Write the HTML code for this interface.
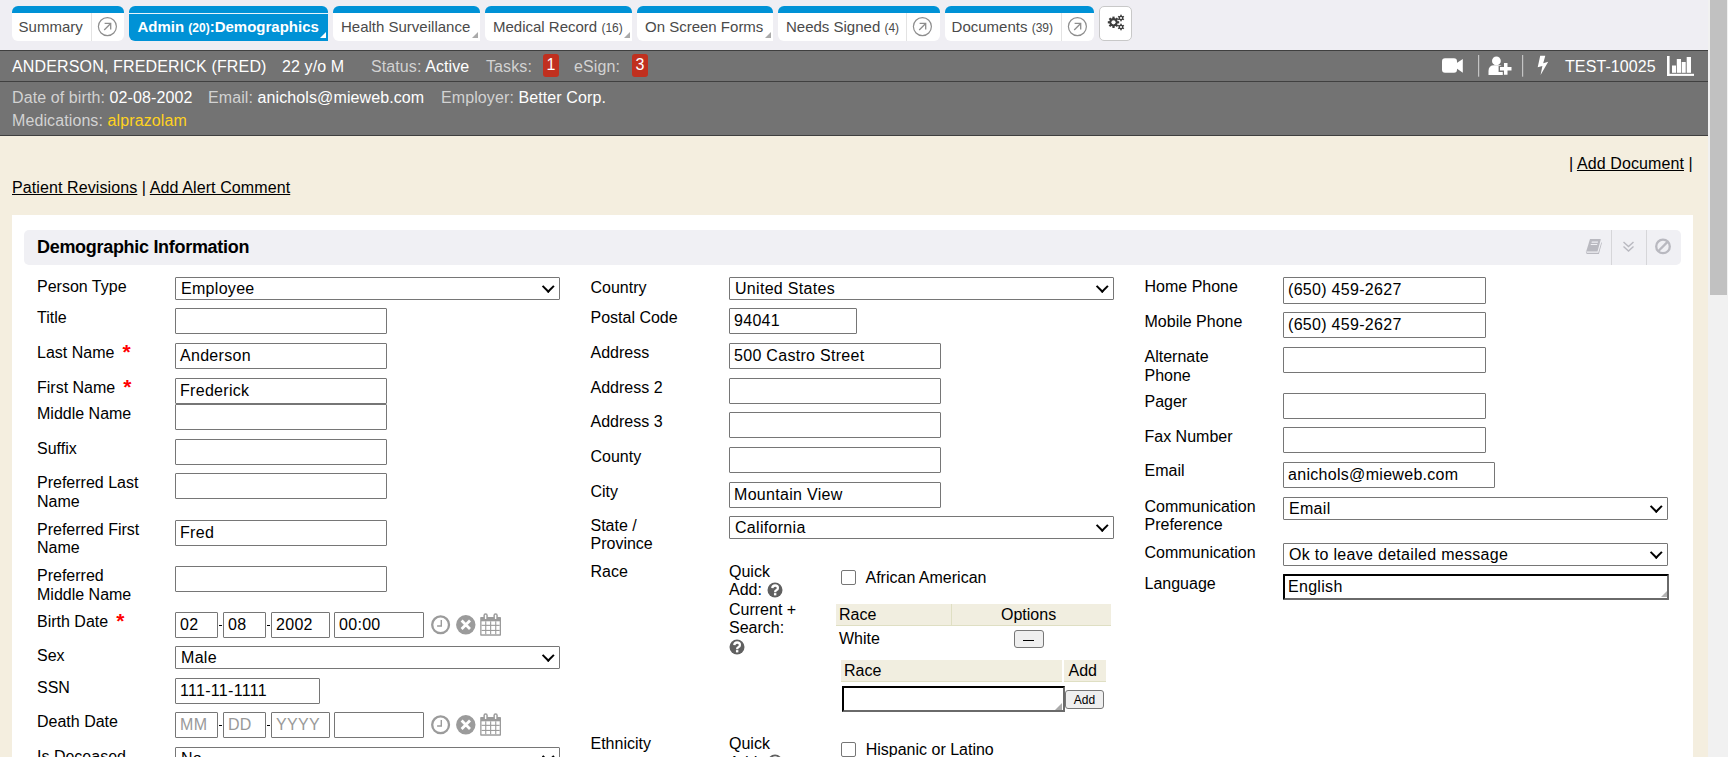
<!DOCTYPE html><html><head><meta charset="utf-8"><style>
*{box-sizing:border-box;margin:0;padding:0}
html,body{width:1728px;height:757px;overflow:hidden;font-family:"Liberation Sans",sans-serif;}
body{position:relative;background:#f4eedf;}
.abs{position:absolute}
#topbar{position:absolute;left:0;top:0;width:1708px;height:50px;background:#efeef3}
.tab{position:absolute;top:6px;height:35px;background:#fff;border-radius:6px 6px 0 6px;border-top:7px solid #0092d6;font-size:15px;color:#4a4a4a;white-space:nowrap}
.tab .t{position:absolute;left:8px;top:5px}
.tab .cnt{font-size:12px}
.tab.active{background:#0092d6;color:#fff;font-weight:bold}
.tab.active:before{content:"";position:absolute;left:0;right:0;top:0;height:1px;background:#e8f4fb}
.tri{position:absolute;right:2.5px;bottom:3px;width:0;height:0;border-left:6.5px solid transparent;border-bottom:6.5px solid #aaa}
.tab.active .tri{border-bottom-color:#fff}
.sep{position:absolute;top:0;bottom:0;width:1px;background:#e3e3e3}
.ext{position:absolute;width:20px;height:20px}
#gray{position:absolute;left:0;top:50px;width:1708px;height:86px;background:#737373;border-top:1px solid #3f3f3f;border-bottom:1px solid #3f3f3f}
#gray .ln{position:absolute;left:0;right:0;top:30px;height:1px;background:#404040}
.g{position:absolute;font-size:16px;color:#fff;white-space:nowrap;letter-spacing:0.1px}
.lbl{color:#d2d2d2}
#scroll{position:absolute;left:1708px;top:0;width:20px;height:757px;background:#f1f1f1}
#thumb{position:absolute;left:1710px;top:0;width:17px;height:295px;background:#c1c1c1}
.lnk{position:absolute;font-size:16px;color:#000;white-space:nowrap;letter-spacing:0.1px}
.lnk u{text-decoration:underline}
#panel{position:absolute;left:12px;top:215px;width:1681px;height:600px;background:#fff}
#hdr{position:absolute;left:24px;top:230px;width:1657px;height:35px;background:#f0f0f4;border-radius:5px}
.L{position:absolute;font-size:16px;color:#000;white-space:nowrap;line-height:18.4px}
.req{color:#f00;font-weight:bold;margin-left:8px;font-size:21px;position:relative;top:1px;line-height:10px}
.in{position:absolute;height:26px;border:1px solid #767676;border-radius:1px;background:#fff;font-size:16px;padding-left:4px;line-height:24px;color:#000;white-space:nowrap;letter-spacing:0.3px}
.sel{position:absolute;height:22px;border:1px solid #767676;border-radius:1px;background:#fff;font-size:16px;padding-left:5px;line-height:22px;color:#000;white-space:nowrap;letter-spacing:0.3px}
.sel:after{content:"";position:absolute;right:7px;top:4.3px;width:6.5px;height:6.5px;border-right:2.2px solid #000;border-bottom:2.2px solid #000;transform:rotate(45deg)}
</style></head><body>
<div id="topbar"></div><div id="gray"><div class="ln"></div></div><div id="scroll"></div><div id="thumb"></div><div id="panel"></div><div id="hdr"></div>

<div class="tab" style="left:12px;width:112px;border-radius:6px"><span class="t" style="left:6.6px">Summary</span><div class="sep" style="left:79px"></div><div class="ext" style="left:85px;top:3.5px"><svg width="20" height="20" viewBox="0 0 20 20"><circle cx="10.4" cy="9.6" r="9" fill="none" stroke="#8e8e8e" stroke-width="1.2"/><path d="M7.2 13 L13.4 6.8 M7.6 6.4 H13.7 V12.6" fill="none" stroke="#8e8e8e" stroke-width="1.3"/></svg></div></div>
<div class="tab active" style="left:129px;width:199px"><span class="t" style="left:8.5px">Admin <span class="cnt">(20)</span>:Demographics</span><div class="tri"></div></div>
<div class="tab" style="left:333px;width:147px"><span class="t">Health Surveillance</span><div class="tri"></div></div>
<div class="tab" style="left:485px;width:147px"><span class="t">Medical Record <span class="cnt">(16)</span></span><div class="tri"></div></div>
<div class="tab" style="left:637px;width:136px"><span class="t">On Screen Forms</span><div class="tri"></div></div>
<div class="tab" style="left:778px;width:162px;border-radius:6px"><span class="t">Needs Signed <span class="cnt">(4)</span></span><div class="sep" style="left:128px"></div><div class="ext" style="left:134px;top:3.5px"><svg width="20" height="20" viewBox="0 0 20 20"><circle cx="10.4" cy="9.6" r="9" fill="none" stroke="#8e8e8e" stroke-width="1.2"/><path d="M7.2 13 L13.4 6.8 M7.6 6.4 H13.7 V12.6" fill="none" stroke="#8e8e8e" stroke-width="1.3"/></svg></div></div>
<div class="tab" style="left:945px;width:149px;border-radius:6px"><span class="t" style="left:6.6px">Documents <span class="cnt">(39)</span></span><div class="sep" style="left:116px"></div><div class="ext" style="left:122px;top:3.5px"><svg width="20" height="20" viewBox="0 0 20 20"><circle cx="10.4" cy="9.6" r="9" fill="none" stroke="#8e8e8e" stroke-width="1.2"/><path d="M7.2 13 L13.4 6.8 M7.6 6.4 H13.7 V12.6" fill="none" stroke="#8e8e8e" stroke-width="1.3"/></svg></div></div>


<div class="g" style="left:12px;top:58px;letter-spacing:0.15px">ANDERSON, FREDERICK (FRED)</div>
<div class="g" style="left:282px;top:58px">22 y/o M</div>
<div class="g" style="left:371px;top:58px"><span class="lbl">Status:</span> Active</div>
<div class="g" style="left:486px;top:58px"><span class="lbl">Tasks:</span></div>
<div class="abs" style="left:543px;top:54px;width:16px;height:23px;background:#c0301f;border-radius:3px;color:#fff;font-size:16px;text-align:center;line-height:22px">1</div>
<div class="g" style="left:574px;top:58px"><span class="lbl">eSign:</span></div>
<div class="abs" style="left:632px;top:54px;width:16px;height:23px;background:#c0301f;border-radius:3px;color:#fff;font-size:16px;text-align:center;line-height:22px">3</div>
<div class="g" style="left:1565px;top:58px">TEST-10025</div>
<div class="g" style="left:12px;top:89px"><span class="lbl">Date of birth:</span> 02-08-2002</div>
<div class="g" style="left:208px;top:89px"><span class="lbl">Email:</span> anichols@mieweb.com</div>
<div class="g" style="left:441px;top:89px"><span class="lbl">Employer:</span> Better Corp.</div>
<div class="g" style="left:12px;top:112px"><span class="lbl">Medications:</span> <span style="color:#ffd21f">alprazolam</span></div>
<div class="lnk" style="left:1569px;top:155px">| <u>Add Document</u> |</div>
<div class="lnk" style="left:12px;top:179px"><u>Patient Revisions</u> | <u>Add Alert Comment</u></div>
<div class="abs" style="left:37px;top:237px;font-size:18px;font-weight:bold;letter-spacing:-0.3px;color:#000;white-space:nowrap">Demographic Information</div>

<div class="L" style="left:37px;top:278.2px">Person Type</div>
<div class="sel" style="left:175px;top:277px;width:385px;height:23px">Employee</div>
<div class="L" style="left:37px;top:308.7px">Title</div>
<div class="in" style="left:175px;top:308px;width:212px;height:26px;"></div>
<div class="L" style="left:37px;top:344.2px">Last Name<span class="req">*</span></div>
<div class="in" style="left:175px;top:343px;width:212px;height:26px;">Anderson</div>
<div class="L" style="left:37px;top:378.9px">First Name<span class="req">*</span></div>
<div class="in" style="left:175px;top:378px;width:212px;height:26px;">Frederick</div>
<div class="L" style="left:37px;top:405.2px">Middle Name</div>
<div class="in" style="left:175px;top:404px;width:212px;height:26px;"></div>
<div class="L" style="left:37px;top:439.8px">Suffix</div>
<div class="in" style="left:175px;top:439px;width:212px;height:26px;"></div>
<div class="L" style="left:37px;top:474.3px">Preferred Last<br>Name</div>
<div class="in" style="left:175px;top:473px;width:212px;height:26px;"></div>
<div class="L" style="left:37px;top:520.8px">Preferred First<br>Name</div>
<div class="in" style="left:175px;top:520px;width:212px;height:26px;">Fred</div>
<div class="L" style="left:37px;top:567.2px">Preferred<br>Middle Name</div>
<div class="in" style="left:175px;top:566px;width:212px;height:26px;"></div>
<div class="L" style="left:37px;top:613.0px">Birth Date<span class="req">*</span></div>
<div class="in" style="left:175px;top:612px;width:43px;height:26px;">02</div>
<div class="in" style="left:223px;top:612px;width:43px;height:26px;">08</div>
<div class="in" style="left:271px;top:612px;width:59px;height:26px;">2002</div>
<div class="in" style="left:334px;top:612px;width:90px;height:26px;">00:00</div>
<div class="L" style="left:37px;top:647.0px">Sex</div>
<div class="sel" style="left:175px;top:646px;width:385px;height:23px">Male</div>
<div class="L" style="left:37px;top:679.0px">SSN</div>
<div class="in" style="left:175px;top:678px;width:145px;height:26px;">111-11-1111</div>
<div class="L" style="left:37px;top:713.0px">Death Date</div>
<div class="in" style="left:175px;top:712px;width:43px;height:26px;"><span style="color:#999">MM</span></div>
<div class="in" style="left:223px;top:712px;width:43px;height:26px;"><span style="color:#999">DD</span></div>
<div class="in" style="left:271px;top:712px;width:59px;height:26px;"><span style="color:#999">YYYY</span></div>
<div class="in" style="left:334px;top:712px;width:90px;height:26px;"></div>
<div class="L" style="left:37px;top:748.0px">Is Deceased</div>
<div class="sel" style="left:175px;top:747px;width:385px;height:23px">No</div>
<div class="L" style="left:590.5px;top:278.5px">Country</div>
<div class="sel" style="left:729px;top:277px;width:385px;height:23px">United States</div>
<div class="L" style="left:590.5px;top:309.4px">Postal Code</div>
<div class="in" style="left:729px;top:308px;width:128px;height:26px;">94041</div>
<div class="L" style="left:590.5px;top:344.3px">Address</div>
<div class="in" style="left:729px;top:343px;width:212px;height:26px;">500 Castro Street</div>
<div class="L" style="left:590.5px;top:378.8px">Address 2</div>
<div class="in" style="left:729px;top:378px;width:212px;height:26px;"></div>
<div class="L" style="left:590.5px;top:413.3px">Address 3</div>
<div class="in" style="left:729px;top:412px;width:212px;height:26px;"></div>
<div class="L" style="left:590.5px;top:448.1px">County</div>
<div class="in" style="left:729px;top:447px;width:212px;height:26px;"></div>
<div class="L" style="left:590.5px;top:483.0px">City</div>
<div class="in" style="left:729px;top:482px;width:212px;height:26px;">Mountain View</div>
<div class="L" style="left:590.5px;top:516.8px">State /<br>Province</div>
<div class="sel" style="left:729px;top:516px;width:385px;height:23px">California</div>
<div class="L" style="left:590.5px;top:563.0px">Race</div>
<div class="L" style="left:590.5px;top:735.0px">Ethnicity</div>
<div class="L" style="left:1144.5px;top:278.3px">Home Phone</div>
<div class="in" style="left:1283px;top:277px;width:203px;height:27px;">(650) 459-2627</div>
<div class="L" style="left:1144.5px;top:312.6px">Mobile Phone</div>
<div class="in" style="left:1283px;top:312px;width:203px;height:26px;">(650) 459-2627</div>
<div class="L" style="left:1144.5px;top:348.2px">Alternate<br>Phone</div>
<div class="in" style="left:1283px;top:347px;width:203px;height:26px;"></div>
<div class="L" style="left:1144.5px;top:393.4px">Pager</div>
<div class="in" style="left:1283px;top:393px;width:203px;height:26px;"></div>
<div class="L" style="left:1144.5px;top:428.1px">Fax Number</div>
<div class="in" style="left:1283px;top:427px;width:203px;height:26px;"></div>
<div class="L" style="left:1144.5px;top:462.3px">Email</div>
<div class="in" style="left:1283px;top:462px;width:212px;height:26px;">anichols@mieweb.com</div>
<div class="L" style="left:1144.5px;top:498.0px">Communication<br>Preference</div>
<div class="sel" style="left:1283px;top:497px;width:385px;height:23px">Email</div>
<div class="L" style="left:1144.5px;top:544.1px">Communication</div>
<div class="sel" style="left:1283px;top:543px;width:385px;height:23px">Ok to leave detailed message</div>
<div class="L" style="left:1144.5px;top:575.0px">Language</div>
<div class="in" style="left:1283px;top:574px;width:386px;height:26px;border:2px solid #000;border-right-color:#6a6a6a;border-bottom-color:#6a6a6a;padding-left:3px;line-height:21.5px">English</div>
<div class="abs" style="left:1661px;top:591px;width:0;height:0;border-left:6px solid transparent;border-bottom:6px solid #b3b3b3"></div>
<div class="abs" style="left:1099px;top:6px;width:33px;height:35px;background:#fff;border:1.5px solid #c8c8c8;border-radius:5px"></div>
<svg class="abs" style="left:1099px;top:6px" width="33" height="35" viewBox="0 0 33 35">
<g fill="#3c3c3c">
<circle cx="14.5" cy="16.3" r="4.2"/>
<g transform="translate(14.5 16.3)">
<rect x="-1.1" y="-5.7" width="2.2" height="11.4"/>
<rect x="-1.1" y="-5.7" width="2.2" height="11.4" transform="rotate(45)"/>
<rect x="-1.1" y="-5.7" width="2.2" height="11.4" transform="rotate(90)"/>
<rect x="-1.1" y="-5.7" width="2.2" height="11.4" transform="rotate(135)"/>
</g>
<g transform="translate(22 12)"><circle r="2.3"/><rect x="-0.75" y="-3.3" width="1.5" height="6.6"/><rect x="-0.75" y="-3.3" width="1.5" height="6.6" transform="rotate(60)"/><rect x="-0.75" y="-3.3" width="1.5" height="6.6" transform="rotate(120)"/></g>
<g transform="translate(22 21)"><circle r="2.3"/><rect x="-0.75" y="-3.3" width="1.5" height="6.6"/><rect x="-0.75" y="-3.3" width="1.5" height="6.6" transform="rotate(60)"/><rect x="-0.75" y="-3.3" width="1.5" height="6.6" transform="rotate(120)"/></g>
</g>
<circle cx="14.5" cy="16.3" r="2.1" fill="#fff"/>
<circle cx="22" cy="12" r="1.1" fill="#fff"/>
<circle cx="22" cy="21" r="1.1" fill="#fff"/>
</svg>
<svg class="abs" style="left:1436px;top:52px" width="264" height="28" viewBox="1436 52 264 28">
<rect x="1442" y="58.3" width="15" height="14.5" rx="3" fill="#fff"/>
<path d="M1456 63.5 L1462.8 59 L1462.8 72.8 L1456 68 Z" fill="#fff"/>
<rect x="1478" y="55" width="1.2" height="21.7" fill="#c4c4c4"/>
<circle cx="1496.4" cy="60.9" r="4.4" fill="#fff"/>
<path d="M1488.5 75 L1488.5 71 Q1488.5 65.3 1494.3 65.3 L1498.3 65.3 Q1503.8 65.3 1503.8 70.5 L1503.8 75 Z" fill="#fff"/>
<path d="M1498.6 65.9 h4.2 v-4.2 h6 v4.2 h4.2 v6 h-4.2 v4.2 h-6 v-4.2 h-4.2 Z" fill="#737373"/>
<path d="M1500 67 h4 v-4 h3.5 v4 h4 v3.5 h-4 v4.3 h-3.5 v-4.3 h-4 Z" fill="#fff"/>
<rect x="1522" y="55" width="1.2" height="21.7" fill="#c4c4c4"/>
<path d="M1540.2 55.8 L1545.3 55.8 L1543.2 63.2 L1548.2 61.8 L1540.6 75 L1542.4 66 L1537.7 67.2 Z" fill="#fff"/>
<rect x="1667" y="56" width="2.6" height="20" fill="#fff"/>
<rect x="1667" y="73.8" width="27" height="2.1" fill="#fff"/>
<rect x="1672" y="65.5" width="4" height="7.3" fill="#fff"/>
<rect x="1676.8" y="59" width="4.2" height="13.8" fill="#fff"/>
<rect x="1681.7" y="62" width="4" height="10.8" fill="#fff"/>
<rect x="1686.7" y="57" width="4.3" height="15.8" fill="#fff"/>
</svg>
<div class="abs" style="left:1611px;top:230px;width:1px;height:35px;background:#d6d6d9"></div>
<div class="abs" style="left:1646px;top:230px;width:1px;height:35px;background:#d6d6d9"></div>
<svg class="abs" style="left:1580px;top:235px" width="101" height="25" viewBox="1580 235 101 25">
<path d="M1590 239 L1600.2 239 Q1600.9 239 1600.7 239.8 L1597.5 251.5 L1586.2 251.5 Z" fill="#b9b9c0"/>
<path d="M1585.9 251 Q1585.6 253.9 1587 253.9 L1598.9 253.9 L1602 242.4 L1601.3 242.4 L1598.3 252.7 L1587.2 252.7 Q1586.4 252.7 1586.4 251.5 Z" fill="#b9b9c0"/>
<path d="M1591.8 241.6 L1598 241.6 L1597.8 242.7 L1591.5 242.7 Z M1590.9 244 L1597.4 244 L1597.1 245.1 L1590.6 245.1 Z" fill="#f0f0f4"/>
<path d="M1623.5 242 L1628.5 246.5 L1633.5 242 M1623.5 246.5 L1628.5 251 L1633.5 246.5" fill="none" stroke="#b9b9c0" stroke-width="1.4"/>
<circle cx="1663" cy="246.4" r="6.8" fill="none" stroke="#b9b9c0" stroke-width="2.3"/>
<path d="M1667.8 241.6 L1658.2 251.2" stroke="#b9b9c0" stroke-width="2.3"/>
</svg>
<svg class="abs" style="left:430px;top:612px" width="74" height="26" viewBox="0 0 74 26">
<circle cx="10.6" cy="12.8" r="8.4" fill="none" stroke="#9b9b9b" stroke-width="2.3"/>
<path d="M11.3 8 V14 H7.1" fill="none" stroke="#9b9b9b" stroke-width="1.4"/>
<circle cx="35.8" cy="12.8" r="9.7" fill="#9b9b9b"/>
<path d="M31.6 8.6 L40 17 M40 8.6 L31.6 17" stroke="#fff" stroke-width="2.8"/>
<rect x="50.2" y="5" width="20.8" height="18.7" fill="#9b9b9b" rx="0.8"/>
<rect x="51.5" y="9.3" width="18.2" height="13" fill="#fff"/>
<g fill="#9b9b9b">
<rect x="51.5" y="12.8" width="18.2" height="1.1"/><rect x="51.5" y="17.9" width="18.2" height="1.1"/>
<rect x="55.2" y="9.3" width="1.1" height="13"/><rect x="60.1" y="9.3" width="1.1" height="13"/><rect x="65.2" y="9.3" width="1.1" height="13"/>
</g>
<rect x="53.4" y="1.3" width="4.4" height="6.5" rx="2.2" fill="#9b9b9b"/><rect x="63.4" y="1.3" width="4.4" height="6.5" rx="2.2" fill="#9b9b9b"/>
<rect x="54.9" y="2.8" width="1.4" height="4.2" fill="#fff"/><rect x="64.9" y="2.8" width="1.4" height="4.2" fill="#fff"/>
</svg>
<svg class="abs" style="left:430px;top:712px" width="74" height="26" viewBox="0 0 74 26">
<circle cx="10.6" cy="12.8" r="8.4" fill="none" stroke="#9b9b9b" stroke-width="2.3"/>
<path d="M11.3 8 V14 H7.1" fill="none" stroke="#9b9b9b" stroke-width="1.4"/>
<circle cx="35.8" cy="12.8" r="9.7" fill="#9b9b9b"/>
<path d="M31.6 8.6 L40 17 M40 8.6 L31.6 17" stroke="#fff" stroke-width="2.8"/>
<rect x="50.2" y="5" width="20.8" height="18.7" fill="#9b9b9b" rx="0.8"/>
<rect x="51.5" y="9.3" width="18.2" height="13" fill="#fff"/>
<g fill="#9b9b9b">
<rect x="51.5" y="12.8" width="18.2" height="1.1"/><rect x="51.5" y="17.9" width="18.2" height="1.1"/>
<rect x="55.2" y="9.3" width="1.1" height="13"/><rect x="60.1" y="9.3" width="1.1" height="13"/><rect x="65.2" y="9.3" width="1.1" height="13"/>
</g>
<rect x="53.4" y="1.3" width="4.4" height="6.5" rx="2.2" fill="#9b9b9b"/><rect x="63.4" y="1.3" width="4.4" height="6.5" rx="2.2" fill="#9b9b9b"/>
<rect x="54.9" y="2.8" width="1.4" height="4.2" fill="#fff"/><rect x="64.9" y="2.8" width="1.4" height="4.2" fill="#fff"/>
</svg>
<div class="abs" style="left:219px;top:625px;width:3px;height:1px;background:#000"></div>
<div class="abs" style="left:267px;top:625px;width:3px;height:1px;background:#000"></div>
<div class="abs" style="left:219px;top:725px;width:3px;height:1px;background:#000"></div>
<div class="abs" style="left:267px;top:725px;width:3px;height:1px;background:#000"></div>
<div class="L" style="left:729px;top:563.0px">Quick<br>Add:</div>
<svg class="abs" style="left:766.6px;top:581.7px" width="16" height="16" viewBox="0 0 16 16"><circle cx="8" cy="8" r="7.5" fill="#606060"/><path d="M5.3 6.2 Q5.5 3.5 8.1 3.5 Q10.9 3.5 10.9 6 Q10.9 7.5 9.3 8.2 Q8.2 8.7 8.2 9.8 V10.2" fill="none" stroke="#fff" stroke-width="2.3"/><rect x="6.95" y="11.1" width="2.4" height="2.3" fill="#fff"/></svg>
<div class="L" style="left:729px;top:600.7px">Current +<br>Search:</div>
<svg class="abs" style="left:728.7px;top:639px" width="16" height="16" viewBox="0 0 16 16"><circle cx="8" cy="8" r="7.5" fill="#606060"/><path d="M5.3 6.2 Q5.5 3.5 8.1 3.5 Q10.9 3.5 10.9 6 Q10.9 7.5 9.3 8.2 Q8.2 8.7 8.2 9.8 V10.2" fill="none" stroke="#fff" stroke-width="2.3"/><rect x="6.95" y="11.1" width="2.4" height="2.3" fill="#fff"/></svg>
<div class="abs" style="left:841px;top:570px;width:15px;height:15px;border:1px solid #767676;border-radius:2px;background:#fff"></div>
<div class="L" style="left:865.5px;top:568.8px">African American</div>
<div class="abs" style="left:836px;top:604px;width:275px;height:22px;background:#f1eee0;border-bottom:1px solid #dfdfc3"></div>
<div class="abs" style="left:951px;top:604px;width:1px;height:22px;background:#dfdfc3"></div>
<div class="L" style="left:839px;top:605.8px">Race</div>
<div class="L" style="left:1001px;top:605.8px">Options</div>
<div class="L" style="left:839px;top:629.7px">White</div>
<div class="abs" style="left:1014px;top:630px;width:30px;height:18px;border:1px solid #767676;border-radius:3px;background:#efefef"></div>
<div class="abs" style="left:1023px;top:639.6px;width:11px;height:1.2px;background:#000"></div>
<div class="abs" style="left:841px;top:660px;width:221px;height:22px;background:#f1eee0;border-bottom:1px solid #dfdfc3"></div>
<div class="abs" style="left:1064px;top:660px;width:42px;height:22px;background:#f1eee0;border-bottom:1px solid #dfdfc3"></div>
<div class="L" style="left:844px;top:662.0px">Race</div>
<div class="L" style="left:1068.5px;top:662.2px">Add</div>
<div class="abs" style="left:842px;top:686px;width:223px;height:26px;border:2px solid #000;border-right-color:#6a6a6a;border-bottom-color:#6a6a6a;background:#fff"></div>
<div class="abs" style="left:1055px;top:703px;width:0;height:0;border-left:7px solid transparent;border-bottom:7px solid #aaa"></div>
<div class="abs" style="left:1065px;top:690px;width:39px;height:19px;border:1px solid #767676;border-radius:3px;background:#efefef;font-size:12px;line-height:19px;text-align:center;color:#000">Add</div>
<div class="L" style="left:729px;top:735.3px">Quick<br>Add:</div>
<svg class="abs" style="left:766.6px;top:754px" width="16" height="16" viewBox="0 0 16 16"><circle cx="8" cy="8" r="7.5" fill="#606060"/><path d="M5.3 6.2 Q5.5 3.5 8.1 3.5 Q10.9 3.5 10.9 6 Q10.9 7.5 9.3 8.2 Q8.2 8.7 8.2 9.8 V10.2" fill="none" stroke="#fff" stroke-width="2.3"/><rect x="6.95" y="11.1" width="2.4" height="2.3" fill="#fff"/></svg>
<div class="abs" style="left:841px;top:741.5px;width:15px;height:15px;border:1px solid #767676;border-radius:2px;background:#fff"></div>
<div class="L" style="left:865.7px;top:741.0px">Hispanic or Latino</div>
</body></html>
